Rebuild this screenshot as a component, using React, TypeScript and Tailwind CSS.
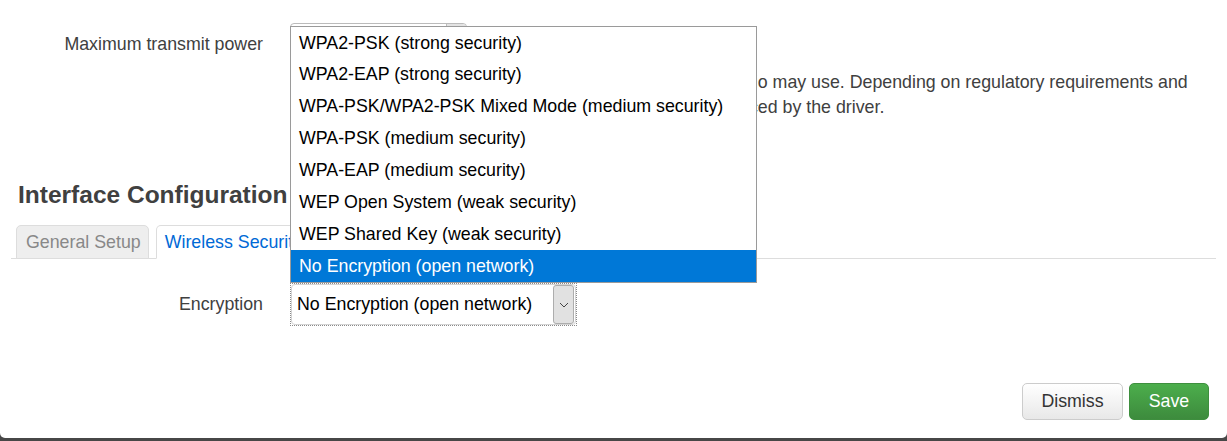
const encOptions = [
  "WPA2-PSK (strong security)",
  "WPA2-EAP (strong security)",
  "WPA-PSK/WPA2-PSK Mixed Mode (medium security)",
  "WPA-PSK (medium security)",
  "WPA-EAP (medium security)",
  "WEP Open System (weak security)",
  "WEP Shared Key (weak security)",
  "No Encryption (open network)",
];

function Chevron() {
  return (
    <svg width="10" height="6" viewBox="0 0 10 6" fill="none">
      <polyline points="1,1 5,5 9,1" stroke="#444" strokeWidth="1" />
    </svg>
  );
}

export default function App() {
  return (
    <div
      className="w-full h-[441px] bg-[#474747] text-[17.8px] text-[#404040]"
      style={{ fontFamily: '"Liberation Sans", Arial, sans-serif' }}
    >
      <div className="relative h-[438px] bg-white rounded-b-[5px] flex flex-col">
        {/* transmit power row */}
        <div className="flex pt-[23px] gap-[27px]">
          <div className="w-[263px] text-right pt-[9px] leading-[25px]">Maximum transmit power</div>
          <div className="flex flex-col">
            <div className="w-[177px] h-[34px] border border-[#bbb] rounded-[4px] flex justify-end">
              <div className="w-[20px] h-full bg-[#e3e3e3] border-l border-[#bbb] rounded-r-[4px]" />
            </div>
            <div className="mt-[13px] ml-[29px] leading-[25px] whitespace-nowrap">
              <div>Specifies the maximum transmit power the wireless radio may use. Depending on regulatory requirements and</div>
              <div>wireless usage, the actual transmit power may be reduced by the driver.</div>
            </div>
          </div>
        </div>

        {/* section heading */}
        <h3 className="mt-[60px] ml-[18px] text-[24.5px] leading-[30px] font-bold text-[#404040]">
          Interface Configuration
        </h3>

        {/* tabs */}
        <div className="mt-[15px] mx-[11px] border-b border-[#ddd] flex items-end gap-[7px] pl-[5px] h-[34px]">
          <div className="h-[34px] -mb-px pl-[9px] pr-[7px] flex items-center bg-[#eee] border border-[#ddd] rounded-t-[5px] text-[#888]">
            General Setup
          </div>
          <div className="h-[34px] -mb-px pl-[8px] pr-[8px] flex items-center bg-white border border-[#ddd] border-b-white rounded-t-[5px] text-[#0069d6]">
            Wireless Security
          </div>
        </div>

        {/* encryption row */}
        <div className="flex items-center mt-[24px] gap-[27px]">
          <div className="w-[263px] text-right leading-[25px]">Encryption</div>
          <div className="w-[287px] h-[43px] border border-dotted border-[#8a8a8a]">
            <div className="h-full border border-[#d4d4d4] rounded-[4px] flex items-center justify-between pl-[5px] pr-px text-black">
              <span>No Encryption (open network)</span>
              <div className="w-[21px] h-[39px] bg-[#e1e1e1] border border-[#adadad] rounded-[3px] flex items-center justify-center">
                <Chevron />
              </div>
            </div>
          </div>
        </div>

        {/* footer buttons */}
        <div className="mt-[57px] flex justify-end gap-[6px] pr-[18px]">
          <button className="w-[101px] h-[37px] rounded-[5px] border border-[#ccc] bg-gradient-to-b from-white to-[#e8e8e8] text-[#333]">
            Dismiss
          </button>
          <button className="w-[80px] h-[37px] rounded-[5px] border border-[#3e8f3e] bg-gradient-to-b from-[#4cae4c] to-[#3d8b3d] text-white">
            Save
          </button>
        </div>

        {/* open dropdown list */}
        <div className="absolute left-[290px] top-[26px] w-[467px] h-[257px] bg-white border border-[#9a9a9a] flex flex-col text-black">
          {encOptions.map((o, i) => (
            <div
              key={o}
              className={
                i === encOptions.length - 1
                  ? "h-[32px] flex items-center pl-[8px] bg-[#0078d7] text-white"
                  : "h-[32px] flex items-center pl-[8px]"
              }
            >
              {o}
            </div>
          ))}
        </div>
      </div>
    </div>
  );
}
